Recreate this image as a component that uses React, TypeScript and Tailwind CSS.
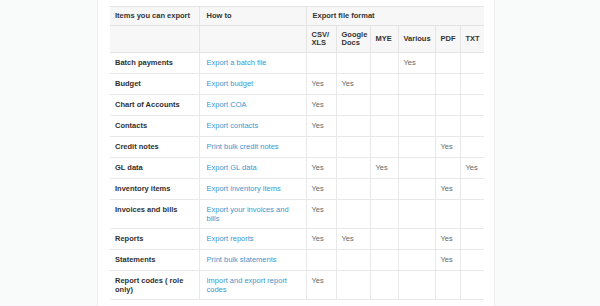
const formats = ['CSV/ XLS', 'Google Docs', 'MYE', 'Various', 'PDF', 'TXT'];

type Row = {
  item: string;
  link: string;
  yes: number[];
};

const rows: Row[] = [
  { item: 'Batch payments', link: 'Export a batch file', yes: [3] },
  { item: 'Budget', link: 'Export budget', yes: [0, 1] },
  { item: 'Chart of Accounts', link: 'Export COA', yes: [0] },
  { item: 'Contacts', link: 'Export contacts', yes: [0] },
  { item: 'Credit notes', link: 'Print bulk credit notes', yes: [4] },
  { item: 'GL data', link: 'Export GL data', yes: [0, 2, 5] },
  { item: 'Inventory items', link: 'Export inventory items', yes: [0, 4] },
  { item: 'Invoices and bills', link: 'Export your invoices and bills', yes: [0] },
  { item: 'Reports', link: 'Export reports', yes: [0, 1, 4] },
  { item: 'Statements', link: 'Print bulk statements', yes: [4] },
  { item: 'Report codes ( role only)', link: 'Import and export report codes', yes: [0] },
];

const colWidths = [89, 107, 30, 34, 28, 37, 25, 24];

export default function App() {
  return (
    <div
      className="flex h-[306px] w-[600px] justify-center overflow-hidden bg-[#f9fafa]"
      style={{ fontFamily: '"Liberation Sans", Arial, sans-serif' }}
    >
      <div className="ml-[-8px] w-[398px] border-x border-[#eceeee] bg-white pl-[12px] pt-[6px]">
        <table className="w-[374px] table-fixed border-collapse text-[7.5px]">
          <colgroup>
            {colWidths.map((w, i) => (
              <col key={i} style={{ width: w }} />
            ))}
          </colgroup>
          <thead className="bg-[#f7f7f7] font-bold text-[#333]">
            <tr className="h-[19px] border-y border-[#e4e4e4]">
              <th className="px-[5px] text-left align-middle font-bold">Items you can export</th>
              <th className="border-l border-[#e4e4e4] px-[7px] text-left font-bold">How to</th>
              <th colSpan={6} className="border-l border-[#e4e4e4] px-[6px] text-left font-bold">
                Export file format
              </th>
            </tr>
            <tr className="h-[27px] border-b border-[#e4e4e4]">
              <th className="px-[5px]"></th>
              <th className="border-l border-[#e4e4e4]"></th>
              {formats.map((f) => (
                <th
                  key={f}
                  className="border-l border-[#e4e4e4] px-[5px] text-left align-middle font-bold leading-[8.5px]"
                >
                  {f}
                </th>
              ))}
            </tr>
          </thead>
          <tbody>
            {rows.map((r) => (
              <tr key={r.item} className="h-[21px] border-b border-[#e8e8e8] leading-[8.5px]">
                <td className="px-[5px] pb-[5px] pt-[6px] align-top font-bold text-[#2f2f2f]">{r.item}</td>
                <td className="border-l border-[#e8e8e8] px-[7px] pb-[5px] pt-[6px] align-top text-[#3a98cf]">
                  {r.link}
                </td>
                {formats.map((f, i) => (
                  <td
                    key={f}
                    className="border-l border-[#e8e8e8] px-[5px] pb-[5px] pt-[6px] align-top text-[#666]"
                  >
                    {r.yes.includes(i) ? 'Yes' : ''}
                  </td>
                ))}
              </tr>
            ))}
          </tbody>
        </table>
      </div>
    </div>
  );
}
